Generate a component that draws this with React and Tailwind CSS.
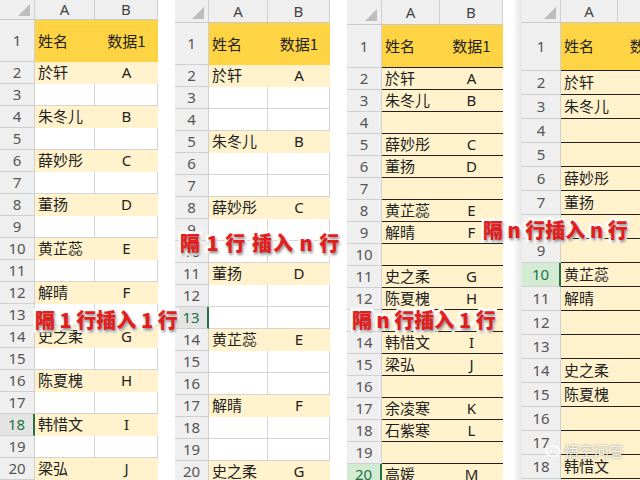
import React from 'react';

const cjk = "font-['Noto_Sans_CJK_SC','Noto_Sans',sans-serif]";
const num = "font-['Noto_Sans','Open_Sans',sans-serif]";

const Corner = () => (
  <svg width="12" height="12" viewBox="0 0 12 12" className="absolute right-[4px] bottom-[3px]">
    <polygon points="12,0 12,12 0,12" fill="#bdbdbd" />
  </svg>
);

// sizes are passed as full class names: panel width, header col, A, B, head row, row 1, data rows
const Panel = ({ pw, hw, aw, bw, headH, row1H, rowH, rows, lined, hl, hlGreen, count }) => {
  const list = [];
  for (let i = 2; i <= count; i++) list.push(i);
  return (
    <div className={`flex flex-col shrink-0 overflow-hidden ${pw}`}>
      <div className={`flex shrink-0 bg-[#efefef] border-b border-[#c9c9c9] ${headH}`}>
        <div className={`relative shrink-0 border-r border-[#d0d0d0] ${hw}`}>
          <Corner />
        </div>
        <div className={`shrink-0 flex items-center justify-center border-r border-[#d0d0d0] text-[15px] text-[#444] ${num} ${aw}`}>A</div>
        <div className={`shrink-0 flex items-center justify-center border-r border-[#d0d0d0] text-[15px] text-[#444] ${num} ${bw}`}>B</div>
      </div>
      <div className={`flex shrink-0 ${row1H}`}>
        <div className={`shrink-0 flex items-center justify-center bg-[#efefef] border-r border-b border-[#d0d0d0] text-[15px] text-[#555] ${num} ${hw}`}>1</div>
        <div className={`shrink-0 flex items-center pl-[3px] bg-[#ffd444] text-[15px] text-[#222] ${cjk} ${lined ? 'border-b border-[#222]' : ''} ${aw}`}>姓名</div>
        <div className={`shrink-0 flex items-center justify-center bg-[#ffd444] text-[15px] text-[#222] ${cjk} ${lined ? 'border-b border-[#222]' : ''} ${bw}`}>数据1</div>
      </div>
      {list.map((n) => {
        const r = rows[n];
        const isHl = n === hl;
        const hdrCls = isHl
          ? hlGreen
            ? 'bg-[#d3ead3] text-[#217346] border-r-2 border-r-[#217346] border-b border-b-[#d0d0d0]'
            : 'bg-[#e4e4e4] text-[#217346] border-r-2 border-r-[#217346] border-b border-b-[#d0d0d0]'
          : 'bg-[#efefef] text-[#555] border-r border-b border-[#d0d0d0]';
        let cellCls;
        if (lined) cellCls = 'bg-[#fff2cc] border-b border-[#222]';
        else if (r) cellCls = 'bg-[#fff2cc] border-b border-[#fff2cc]';
        else cellCls = 'bg-white border-b border-r border-[#d4d4d4]';
        return (
          <div key={n} className={`flex shrink-0 ${rowH}`}>
            <div className={`shrink-0 flex items-center justify-center text-[15px] ${num} ${hdrCls} ${hw}`}>{n}</div>
            <div className={`shrink-0 flex items-center pl-[3px] text-[15px] text-[#222] ${cjk} ${cellCls} ${aw}`}>{r ? r[0] : ''}</div>
            <div className={`shrink-0 flex items-center justify-center text-[15px] text-[#222] ${num} ${cellCls} ${bw}`}>{r ? r[1] : ''}</div>
          </div>
        );
      })}
    </div>
  );
};

const p1 = { 2: ['於轩', 'A'], 4: ['朱冬儿', 'B'], 6: ['薛妙彤', 'C'], 8: ['董扬', 'D'], 10: ['黄芷蕊', 'E'], 12: ['解晴', 'F'], 14: ['史之柔', 'G'], 16: ['陈夏槐', 'H'], 18: ['韩惜文', 'I'], 20: ['梁弘', 'J'] };
const p2 = { 2: ['於轩', 'A'], 5: ['朱冬儿', 'B'], 8: ['薛妙彤', 'C'], 11: ['董扬', 'D'], 14: ['黄芷蕊', 'E'], 17: ['解晴', 'F'], 20: ['史之柔', 'G'] };
const p3 = { 2: ['於轩', 'A'], 3: ['朱冬儿', 'B'], 5: ['薛妙彤', 'C'], 6: ['董扬', 'D'], 8: ['黄芷蕊', 'E'], 9: ['解晴', 'F'], 11: ['史之柔', 'G'], 12: ['陈夏槐', 'H'], 14: ['韩惜文', 'I'], 15: ['梁弘', 'J'], 17: ['余凌寒', 'K'], 18: ['石紫寒', 'L'], 20: ['高媛', 'M'] };
const p4 = { 2: ['於轩', ''], 3: ['朱冬儿', ''], 6: ['薛妙彤', ''], 7: ['董扬', ''], 10: ['黄芷蕊', ''], 11: ['解晴', ''], 14: ['史之柔', ''], 15: ['陈夏槐', ''], 18: ['韩惜文', ''] };

const labelCls = `absolute whitespace-nowrap text-[20px] leading-none font-black text-[#e41d1d] ${cjk} [-webkit-text-stroke:5px_white] [paint-order:stroke_fill] [text-shadow:1px_2px_3px_rgba(0,0,0,0.5)]`;

const App = () => {
  return (
    <div className="relative w-[640px] h-[480px] overflow-hidden bg-white flex">
      <Panel pw="w-[158px]" hw="w-[35px]" aw="w-[60px]" bw="w-[63px]" headH="h-[20px]" row1H="h-[42px]" rowH="h-[22px]" rows={p1} hl={18} count={20} />
      <div className="w-[17px] shrink-0" />
      <Panel pw="w-[155px]" hw="w-[34px]" aw="w-[59px]" bw="w-[62px]" headH="h-[23px]" row1H="h-[42px]" rowH="h-[22px]" rows={p2} hl={13} count={20} />
      <div className="w-[17px] shrink-0" />
      <Panel pw="w-[156px]" hw="w-[35px]" aw="w-[58px]" bw="w-[63px]" headH="h-[25px]" row1H="h-[43px]" rowH="h-[22px]" rows={p3} lined hl={20} hlGreen count={20} />
      <div className="w-[19px] shrink-0 bg-gradient-to-r from-white via-white to-[#e6e6e6]" />
      <Panel pw="w-[158px]" hw="w-[39px]" aw="w-[57px]" bw="w-[62px]" headH="h-[23px]" row1H="h-[48px]" rowH="h-[24px]" rows={p4} lined hl={10} hlGreen count={19} />

      <div className={`${labelCls} left-[35px] top-[310px]`}>隔 1 行插入 1 行</div>
      <div className={`${labelCls} left-[180px] top-[233px] tracking-[1px]`}>隔 1 行 插入 n 行</div>
      <div className={`${labelCls} left-[352px] top-[310px]`}>隔 n 行插入 1 行</div>
      <div className={`${labelCls} left-[483px] top-[220px]`}>隔 n 行插入 n 行</div>

      <div className="absolute left-[545px] top-[440px] flex items-center gap-[3px] text-white/90 [text-shadow:0_0_2px_rgba(0,0,0,0.5)]">
        <svg width="16" height="14" viewBox="0 0 16 14">
          <ellipse cx="8" cy="7" rx="7" ry="5" fill="none" stroke="white" strokeWidth="1.5" opacity="0.9" />
          <circle cx="6" cy="7" r="1" fill="white" />
          <circle cx="10" cy="7" r="1" fill="white" />
        </svg>
        <span className={`text-[15px] ${cjk}`}>悟空问答</span>
      </div>
    </div>
  );
};

export default App;
